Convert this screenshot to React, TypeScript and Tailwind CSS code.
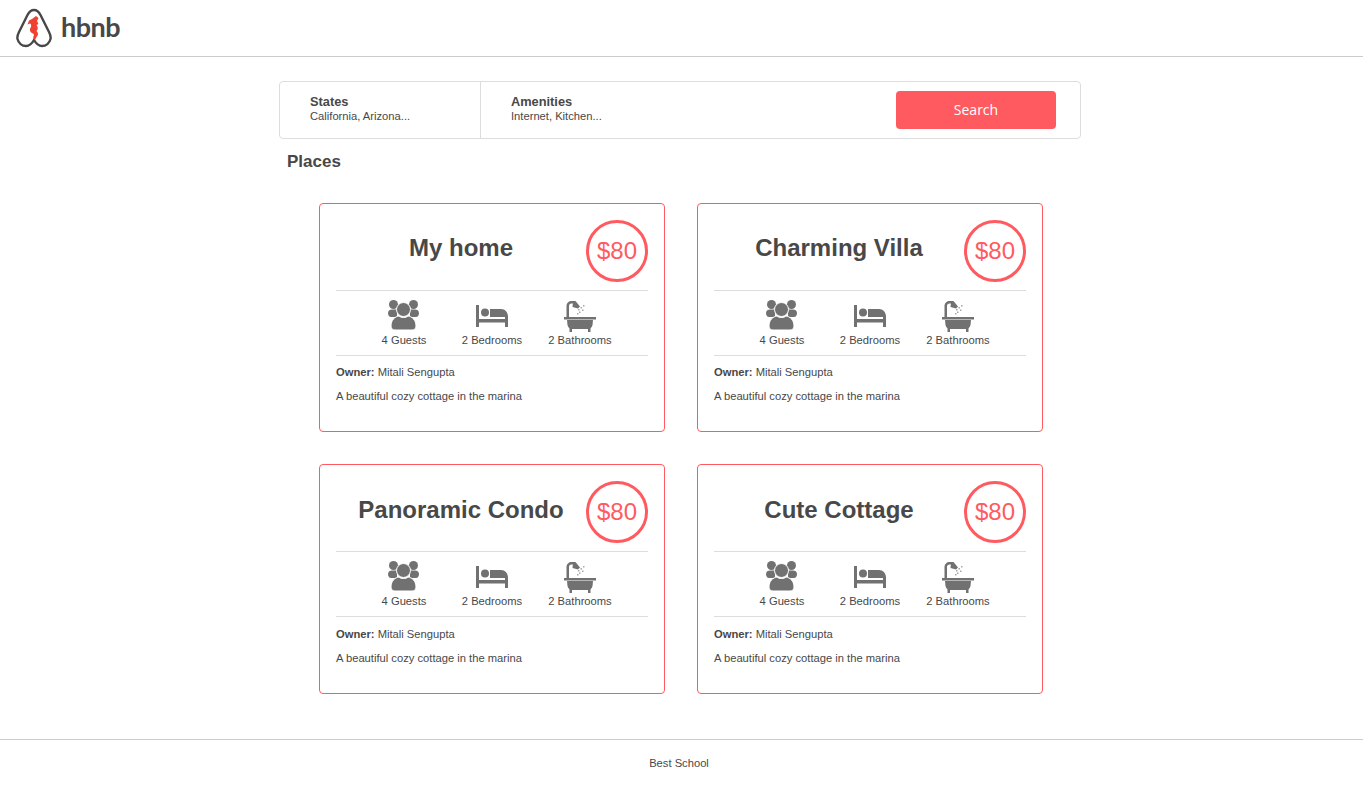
const places = ["My home", "Charming Villa", "Panoramic Condo", "Cute Cottage"];

function Logo() {
	return (
		<svg width="36" height="40" viewBox="0 0 36 40" fill="none">
			<path
				d="M18 2 C14.500 2 13 4 11.500 7 L3 24 C1.500 27 1 29 1.500 31 C2.500 35 6 38 10 38 C13 38 16 35.500 18 32 C20 35.500 23 38 26 38 C30 38 33.500 35 34.500 31 C35 29 34.500 27 33 24 L24.500 7 C23 4 21.500 2 18 2 Z"
				stroke="#484848"
				strokeWidth="2.400"
			/>
			<path
				d="M20 8 L22.500 10 L21 13 L22.500 16 L20.500 17 C22 19 22.500 21 20.500 23 C22.500 25 22.500 27 20.500 29 L19 32 C17.500 31.500 17 30 17.500 28 C18.500 27 18 26 16 25 C13.500 23.500 13.500 21 15 19 C15.500 17 15 16 14 15.500 L11.500 16.500 L13 12.500 L16 11 Z"
				fill="#f0402f"
			/>
		</svg>
	);
}

function GuestIcon() {
	return (
		<svg width="32" height="30" viewBox="0 0 32 30" fill="#717171">
			<circle cx="5.500" cy="4.500" r="4.500" />
			<circle cx="25.500" cy="4.500" r="4.500" />
			<path d="M0 13 C0 10.500 2 9.500 4 9.500 L9 9.500 L9 17 L3 17 C1 17 0 15 0 13 Z" />
			<path d="M31 13 C31 10.500 29 9.500 27 9.500 L22 9.500 L22 17 L28 17 C30 17 31 15 31 13 Z" />
			<path
				d="M3 26 C3 20 7 16.500 11 16 C13 18 18 18 20 16 C24 16.500 28 20 28 26 C28 29 26 30 24 30 L7 30 C5 30 3 29 3 26 Z"
				stroke="#ffffff"
				strokeWidth="1"
			/>
			<circle cx="15.500" cy="9.500" r="7" stroke="#ffffff" strokeWidth="1" />
		</svg>
	);
}

function BedIcon() {
	return (
		<svg width="32" height="22" viewBox="0 0 32 22" fill="#717171">
			<rect x="0" y="0" width="3" height="22" />
			<rect x="29" y="12" width="3" height="10" />
			<rect x="3" y="14" width="26" height="3.500" />
			<circle cx="9" cy="7.500" r="4" />
			<path d="M14 4 L25 4 C29 4 32 7 32 12 L14 12 Z" />
		</svg>
	);
}

function BathIcon() {
	return (
		<svg width="32" height="32" viewBox="0 0 32 32" fill="#717171">
			<path d="M2.500 17 L2.500 6 C2.500 3 5 1 7.500 1 L11 1 L11 3.500 L7.500 3.500 C6 3.500 5 4.500 5 6 L5 17 Z" />
			<path d="M9 2 L11.500 1 L16 6.500 L14 8.500 L8.500 7 Z" />
			<g fill="#a8a8a8">
				<rect x="14" y="9" width="1.500" height="1.500" />
				<rect x="16.500" y="7" width="1.500" height="1.500" />
				<rect x="19" y="5" width="1.500" height="1.500" />
				<rect x="15" y="11.500" width="1.500" height="1.500" />
				<rect x="18" y="9.500" width="1.500" height="1.500" />
				<rect x="13" y="13" width="1.500" height="1.500" />
			</g>
			<rect x="0" y="17" width="32" height="2.500" />
			<path d="M3 20 L29 20 L28.500 25 C28 27.500 26 29 24 29 L8 29 C6 29 4 27.500 3.500 25 Z" />
			<rect x="5.500" y="28" width="2.500" height="4" />
			<rect x="24" y="28" width="2.500" height="4" />
		</svg>
	);
}

function PlaceCard({ title }: { title: string }) {
	return (
		<article className="h-[229.4px] rounded border border-[#ff5a5f] px-4 pt-4">
			<div className="flex h-[71px] items-start justify-between border-b border-[#dddddd]">
				<h2 className="mt-[13.2px] flex-1 text-center text-[24px] leading-[29px] font-bold">
					{title}
				</h2>
				<div className="flex h-[62px] w-[62px] shrink-0 items-center justify-center rounded-full border-[3px] border-[#ff5a5f] text-[24px] text-[#ff5a5f]">
					$80
				</div>
			</div>
			<div className="flex h-[65px] items-end justify-center border-b border-[#dddddd] pb-[8px] text-[11.2px] leading-[14px]">
				<div className="flex w-[88px] flex-col items-center gap-[3px]">
					<GuestIcon />
					<span>4 Guests</span>
				</div>
				<div className="flex w-[88px] flex-col items-center gap-[6px]">
					<BedIcon />
					<span>2 Bedrooms</span>
				</div>
				<div className="flex w-[88px] flex-col items-center gap-[1px]">
					<BathIcon />
					<span>2 Bathrooms</span>
				</div>
			</div>
			<p className="mt-[9.2px] text-[11.2px] leading-[14px]">
				<b>Owner:</b> Mitali Sengupta
			</p>
			<p className="mt-[10px] text-[11.2px] leading-[14px]">A beautiful cozy cottage in the marina</p>
		</article>
	);
}

export default function App() {
	return (
		<div className="min-h-[788px] bg-white font-['Liberation_Sans',Arial,sans-serif] text-[#484848]">
			{/* Header */}
			<header className="flex h-[57px] items-center gap-[9px] border-b border-[#cccccc] pl-[16px]">
				<Logo />
				<span className="mb-[3px] font-['Lato',sans-serif] text-[27px] leading-none font-bold tracking-[-0.5px]">
					hbnb
				</span>
			</header>

			<main className="ml-[279px] w-[802px] pt-[24px]">
				{/* Filters */}
				<section className="flex h-[58px] items-center rounded border border-[#dddddd]">
					<div className="flex h-full w-[201px] flex-col justify-center border-r border-[#dddddd] pb-[3px] pl-[30px]">
						<h3 className="text-[12.8px] leading-[15px] font-bold">States</h3>
						<p className="text-[11.2px] leading-[14px]">California, Arizona...</p>
					</div>
					<div className="flex h-full flex-1 flex-col justify-center pb-[3px] pl-[30px]">
						<h3 className="text-[12.8px] leading-[15px] font-bold">Amenities</h3>
						<p className="text-[11.2px] leading-[14px]">Internet, Kitchen...</p>
					</div>
					<button className="mr-[24px] h-[38px] w-[160px] rounded-sm bg-[#ff5a5f] pb-px font-['Open_Sans',sans-serif] text-[14px] text-white">
						Search
					</button>
				</section>

				{/* Places */}
				<h1 className="mt-[13px] ml-[8px] text-[17px] leading-5 font-bold">Places</h1>
				<section className="mt-[31px] ml-[40px] grid w-[724px] grid-cols-[346px_346px] gap-[32px]">
					{places.map((p) => (
						<PlaceCard key={p} title={p} />
					))}
				</section>
			</main>

			<footer className="mt-[45px] flex h-[49px] items-center justify-center border-t border-[#cccccc] pr-[5px] text-[11.2px]">
				Best School
			</footer>
		</div>
	);
}
